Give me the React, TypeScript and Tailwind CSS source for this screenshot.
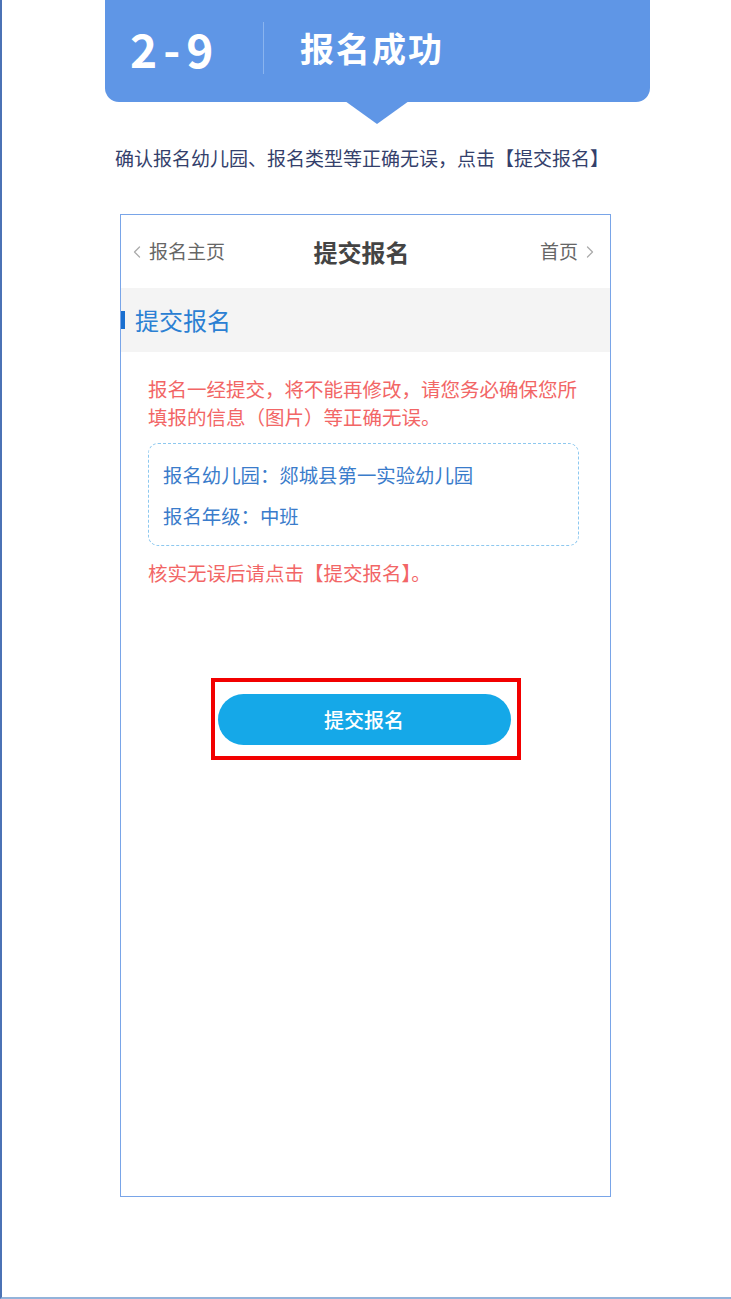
import { ChevronLeft, ChevronRight } from 'lucide-react'

const font = { fontFamily: '"Noto Sans CJK SC", "Noto Sans", sans-serif' }

export default function App() {
  return (
    <div
      className="relative w-[731px] h-[1299px] bg-white border-l-2 border-l-[#4b72b5] border-b-2 border-b-[#93b3da] overflow-hidden"
      style={font}
    >
      {/* Banner */}
      <div className="relative ml-[103px] w-[545px] h-[102px] bg-[#5f96e6] rounded-b-[14px] flex items-center pb-[6px]">
        <div className="pl-[25px] w-[158px] text-white text-[46px] font-bold tracking-[6px] leading-none">2-9</div>
        <div className="w-px h-[52px] bg-[#8ab4ef]" />
        <div className="pl-[36px] text-white text-[34px] font-bold tracking-[2px] leading-none">报名成功</div>
        <div className="absolute left-[240px] top-[101px] w-0 h-0 border-l-[32px] border-l-transparent border-r-[32px] border-r-transparent border-t-[23px] border-t-[#5f96e6]" />
      </div>

      {/* Subtitle */}
      <p className="mt-[43px] ml-[113px] text-[19px] leading-[26px] text-[#34406b]">
        确认报名幼儿园、报名类型等正确无误，点击【提交报名】
      </p>

      {/* Phone screenshot */}
      <div className="mt-[43px] ml-[118px] w-[491px] h-[983px] border border-[#79a5e8] flex flex-col">
        {/* Nav */}
        <div className="h-[73px] flex items-center pl-[6px] pr-[10px] bg-white">
          <div className="flex-1 flex items-center gap-[2px] text-[19px] text-[#666]">
            <ChevronLeft className="w-[20px] h-[24px] text-[#aaa]" strokeWidth={1.5} />
            <span>报名主页</span>
          </div>
          <div className="text-[24px] font-bold text-[#444] -ml-[2px] mr-[2px]">提交报名</div>
          <div className="flex-1 flex items-center justify-end gap-[2px] text-[19px] text-[#666]">
            <span>首页</span>
            <ChevronRight className="w-[20px] h-[24px] text-[#aaa]" strokeWidth={1.5} />
          </div>
        </div>

        {/* Section header */}
        <div className="h-[64px] bg-[#f4f4f4] flex items-center">
          <div className="w-[4px] h-[18px] bg-[#1a6fd0] mr-[10px]" />
          <span className="text-[24px] text-[#2b80d3]">提交报名</span>
        </div>

        {/* Content */}
        <div className="pl-[27px] pr-[20px] pt-[23px]">
          <p className="text-[19.5px] leading-[28px] text-[#f26666]">
            报名一经提交，将不能再修改，请您务必确保您所填报的信息（图片）等正确无误。
          </p>
          <div className="mt-[12px] w-[431px] border border-dashed border-[#8dc8ef] rounded-[10px] pl-[14px] pt-[17px] pb-[15px] flex flex-col gap-[13px]">
            <div className="text-[19.4px] leading-[28px] text-[#3a7ccb]">报名幼儿园：郯城县第一实验幼儿园</div>
            <div className="text-[19.4px] leading-[28px] text-[#3a7ccb]">报名年级：中班</div>
          </div>
          <p className="mt-[13px] text-[19.5px] leading-[28px] text-[#f26666]">核实无误后请点击【提交报名】。</p>
        </div>

        <div className="mt-[91px] flex justify-center">
          <div className="w-[310px] h-[82px] border-[4px] border-[#f20000] pt-[12px] pl-[3px] pr-[6px]">
            <button className="w-full h-[51px] rounded-full bg-[#15a8e8] text-white text-[20px] font-medium">提交报名</button>
          </div>
        </div>
      </div>
    </div>
  )
}
